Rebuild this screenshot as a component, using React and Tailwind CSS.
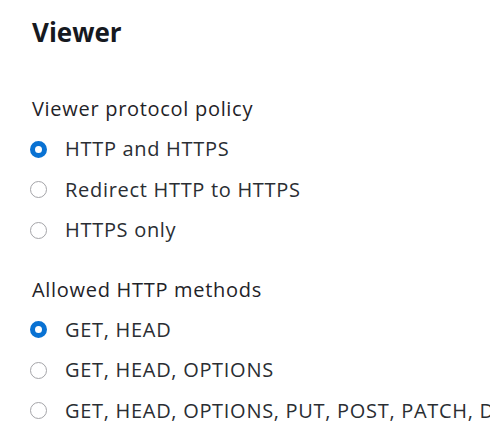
import React from "react";

const groups = [
  {
    label: "Viewer protocol policy",
    options: ["HTTP and HTTPS", "Redirect HTTP to HTTPS", "HTTPS only"],
  },
  {
    label: "Allowed HTTP methods",
    options: [
      "GET, HEAD",
      "GET, HEAD, OPTIONS",
      "GET, HEAD, OPTIONS, PUT, POST, PATCH, DELETE",
    ],
  },
];

function Radio({ checked }) {
  return checked ? (
    <span className="block w-[17px] h-[17px] shrink-0 rounded-full border-[5px] border-[#0972d3] bg-white" />
  ) : (
    <span className="block w-[17px] h-[17px] shrink-0 rounded-full border-[1.5px] border-[#a4a4a8] bg-white" />
  );
}

export default function App() {
  return (
    <div className="w-[490px] h-[431px] overflow-hidden bg-white pl-8 pt-4 font-['Open_Sans',sans-serif] whitespace-nowrap">
      <h2 className="text-[26px] leading-[32px] font-bold text-[#16191f]">Viewer</h2>

      <div className="mt-[41px] text-[20px] leading-[40px] tracking-[0.7px]">
        {groups.map((g, gi) => (
          <div key={g.label} className={gi > 0 ? "mt-[19px]" : ""}>
            <div className="text-[#1f2328]">{g.label}</div>
            {g.options.map((o, i) => (
              <label key={o} className="flex items-center gap-[18px] h-[40.5px] -ml-[2px]">
                <Radio checked={i === 0} />
                <span className="text-[#2a2e33]">{o}</span>
              </label>
            ))}
          </div>
        ))}
      </div>
    </div>
  );
}
